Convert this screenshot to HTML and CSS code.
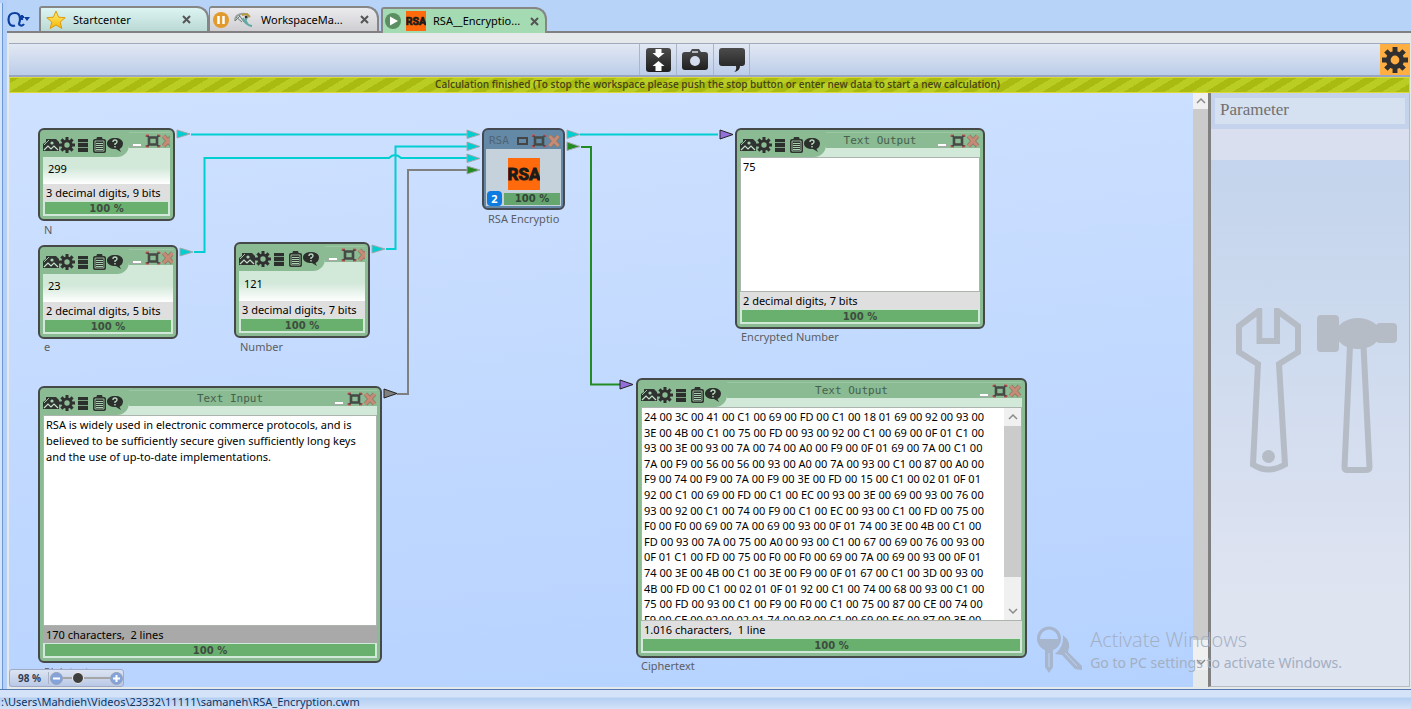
FILE: index.html
```html
<!DOCTYPE html>
<html lang="en">
<head>
<meta charset="utf-8">
<title>RSA_Encryption.cwm</title>
<link rel="stylesheet" href="styles.css">
</head>
<body>
<svg class="defs" aria-hidden="true">
  <defs>
    <linearGradient id="dark" x1="0" y1="0" x2="0" y2="1"><stop offset="0" stop-color="#4c4c4c"/><stop offset="1" stop-color="#1f1f1f"/></linearGradient>
    <linearGradient id="gold" x1="0" y1="0" x2="0" y2="1"><stop offset="0" stop-color="#fff27a"/><stop offset="1" stop-color="#f5b400"/></linearGradient>
    <symbol id="i-picture" viewBox="0 0 16 16"><path d="M0 14V7l3-2V2h10l3 3v9z" fill="#2f3331"/><path d="M1 8l5-5" stroke="#9cc5a4"/><circle cx="9" cy="6" r="1.6" fill="#a9cfb0"/><path d="M1 13l4-4 3 3 3-3 4 4" fill="none" stroke="#c4e0ca" stroke-width="1.2"/></symbol>
    <symbol id="i-gear" viewBox="0 0 16 16"><path d="M8 0v16M0 8h16M2.4 2.4l11.2 11.2M13.6 2.4L2.4 13.6" stroke="#303030" stroke-width="3"/><circle cx="8" cy="8" r="5.6" fill="#303030"/><circle cx="8" cy="8" r="2.7" class="hole"/></symbol>
    <symbol id="i-list" viewBox="0 0 16 16"><path d="M3 2h10v13H3z" fill="#2c302d"/><path d="M3 5.500h10M3 10.500h10" stroke="#8abb93" stroke-width=".8"/></symbol>
    <symbol id="i-clip" viewBox="0 0 16 16"><rect x="2" y="2" width="13" height="14" rx="2" fill="#303430"/><path d="M5 3h7L11 0H6z" fill="#303430"/><path d="M4 4h9v10H4z" fill="none" stroke="#a9cfb0" stroke-width=".8"/><path d="M5 6.500h7M5 8.500h7M5 10.500h7M5 12.500h7" stroke="#a9cfb0"/></symbol>
    <symbol id="i-help" viewBox="0 0 16 16"><path d="M8 1c4.500 0 8 2 8 5.500 0 3-2 5-3.500 5.500L14 15l-5-3C3 12 0 10 0 6.500S3.500 1 8 1z" fill="#2c302d"/><path d="M6 5q0-2 2-2t2 2q0 1-2 2v1M8 9v1.500" fill="none" stroke="#b9d8bf" stroke-width="1.400"/></symbol>
    <symbol id="i-max" viewBox="0 0 16 14"><path d="M4 3.500h8v7H4z" fill="none" stroke="#454a46" stroke-width="2.600"/><path d="M1 2h3M12 2h3M1 12h3M12 12h3" stroke="#454a46" stroke-width="2"/><path d="M1 3V1h3M12 1h3v2M1 11v2h3M15 11v2h-3" fill="none" stroke="#d0565a" stroke-width="1"/></symbol>
    <symbol id="i-close" viewBox="0 0 14 14"><path d="M2.500 2l9 10M11.500 2l-9 10" stroke="#8f7767" stroke-width="4.600"/><path d="M2.500 2l9 10M11.500 2l-9 10" stroke="#c68b75" stroke-width="3"/></symbol>
    <symbol id="i-rsa" viewBox="0 0 32 32"><path d="M0 0h32v32H0z" fill="#ff6a0d"/><text x="16" y="22" text-anchor="middle" class="rsa-letters">RSA</text></symbol>
    <symbol id="i-x" viewBox="0 0 9 9"><path d="M1 1l7 7M8 1L1 8" stroke="#555" stroke-width="2"/></symbol>
    <symbol id="i-up" viewBox="0 0 12 8"><path d="M2 6l4-4 4 4" fill="none" stroke="#8a8a8a" stroke-width="1.500"/></symbol>
    <symbol id="i-down" viewBox="0 0 12 8"><path d="M2 2l4 4 4-4" fill="none" stroke="#8a8a8a" stroke-width="1.500"/></symbol>
  </defs>
</svg>

<div class="window">
  <div class="side-edge"></div>
  <main class="workspace">
    <nav class="tabs">
      <button class="menu" aria-label="Menu">
        <svg width="24" height="18" viewBox="0 0 24 18"><path d="M8 14.500C4 16 1.500 13 1.500 8.500S4 2 8 2s5 3 5 6-1 4-1 5 3 3 5 0M15 4v5M12 6h5" fill="none" stroke="#0d3fa3" stroke-width="2.200"/><path d="M17 6h6l-3 4z" fill="#0d3fa3"/></svg>
      </button>
      <div class="tab tab-start">
        <svg width="20" height="20" viewBox="0 0 20 20"><path d="M10 1l2.600 6.200 6.600.5-5 4.300 1.600 6.500L10 15l-5.800 3.500L5.800 12l-5-4.300 6.600-.5z" fill="url(#gold)" stroke="#dd9a10"/></svg>
        <a href="#start">Startcenter</a>
        <button class="tab-close" aria-label="Close Startcenter"><svg width="9" height="9"><use href="#i-x"/></svg></button>
      </div>
      <div class="tab tab-manager">
        <svg width="16" height="16" viewBox="0 0 16 16"><circle cx="8" cy="8" r="8" fill="#e39a2d"/><path d="M5.500 4v8M10.500 4v8" stroke="#fff" stroke-width="2.500"/></svg>
        <svg class="manager-icon" width="20" height="16" viewBox="0 0 20 16"><path d="M1 9q0-6 6-7 6-1 8 3" fill="none" stroke="#9aa4a2" stroke-width="2"/><path d="M2 5l6 5M5 3l5 7M1 9l5-5" stroke="#6d7b78"/><path d="M8 3l5-1 3 3" fill="none" stroke="#b9983f" stroke-width="2"/><path d="M9 6q2 7 9 8M14 5q-3 1-2 4 2 5 5 5" fill="none" stroke="#64aaa4" stroke-width="2"/><circle cx="12" cy="5" r="1.300" fill="#333"/></svg>
        <a href="#manager">WorkspaceMa...</a>
        <button class="tab-close" aria-label="Close WorkspaceManager"><svg width="9" height="9"><use href="#i-x"/></svg></button>
      </div>
      <div class="tab tab-rsa">
        <svg width="16" height="16" viewBox="0 0 16 16"><circle cx="8" cy="8" r="8" fill="#5b8f61"/><path d="M5 3.500l8 4.500-8 4.500z" fill="#fff"/></svg>
        <svg class="rsa-small" width="20" height="20"><use href="#i-rsa"/></svg>
        <a href="#rsa">RSA__Encryptio...</a>
        <button class="tab-close" aria-label="Close RSA_Encryption"><svg width="9" height="9"><use href="#i-x"/></svg></button>
      </div>
    </nav>

    <section class="sheet">
      <div class="toolbar">
        <div class="tools">
          <button class="tool" aria-label="Fit to screen"><svg width="26" height="26" viewBox="0 0 26 26"><rect x="1" y="1" width="25" height="24" rx="3" fill="url(#dark)"/><path d="M10.500 2h6v4h3l-6 5-6-5h3zM13.500 14l6 5h-3v5h-6v-5h-3z" fill="#fff"/></svg></button>
          <button class="tool" aria-label="Screenshot"><svg width="28" height="26" viewBox="0 0 28 26"><path d="M4 5h5l2-3h7l2 3h4q3 0 3 3v12q0 3-3 3H4q-3 0-3-3V8q0-3 3-3z" fill="url(#dark)"/><path d="M11 5h6" stroke="#d5deee" stroke-width="1.500"/><circle cx="14" cy="14" r="5" fill="#d3ddee"/></svg></button>
          <button class="tool" aria-label="Comment"><svg width="28" height="26" viewBox="0 0 28 26"><path d="M4 1h20q3 0 3 3v12q0 3-3 3h-2q0 5-6 6 3-2 2-6H4q-3 0-3-3V4q0-3 3-3z" fill="url(#dark)"/></svg></button>
        </div>
        <button class="settings" aria-label="Settings"><svg width="26" height="26"><use href="#i-gear"/></svg></button>
      </div>
      <div class="banner">Calculation finished (To stop the workspace please push the stop button or enter new data to start a new calculation)</div>

      <div class="content">
        <div class="canvas">
          <svg class="wires" width="1184" height="594" viewBox="9 93 1184 594">
            <g fill="none" stroke="#00ced1" stroke-width="2">
              <path d="M191 134.500H468M194 252h10.500V158H389q6-6 12 0h67M386 249h9.500V146.500H468M580 134.500H718"/>
            </g>
            <path d="M397 394h11V170h60" fill="none" stroke="#808080" stroke-width="2"/>
            <path d="M581 147h10V384.500h29" fill="none" stroke="#228b22" stroke-width="2"/>
            <g fill="#00ced1" stroke="#a0a8ac">
              <path d="M177 130l13 4-13 4zM180 248l13 4-13 4zM372 245l13 4-13 4zM467 130l13 4.500-13 4zM467 142l13 4.500-13 4zM467 154l13 4.500-13 4zM567 130l13 4.500-13 4z"/>
            </g>
            <path d="M467 166l13 4-13 4zM567 142l13 4.500-13 4z" fill="#228b22" stroke="#a0a8ac"/>
            <path d="M720 130l13 4.500-13 4.500zM620 380l13 4.500-13 4.500z" fill="#9370db" stroke="#222"/>
            <path d="M384 389l13 4.500-13 4.500z" fill="#808080" stroke="#222"/>
          </svg>

          <article class="node node-n">
            <header class="head">
              <div class="icons"><button aria-label="View"><svg><use href="#i-picture"/></svg></button><button aria-label="Settings"><svg><use href="#i-gear"/></svg></button><button aria-label="Data"><svg><use href="#i-list"/></svg></button><button aria-label="Log"><svg><use href="#i-clip"/></svg></button><button aria-label="Help"><svg><use href="#i-help"/></svg></button></div>
              <div class="titlebar"><h2></h2><button class="min" aria-label="Minimize"></button><button class="max" aria-label="Maximize"><svg><use href="#i-max"/></svg></button><button class="close" aria-label="Close"><svg><use href="#i-close"/></svg></button></div>
            </header>
            <input class="value" id="n" type="text" value="299">
            <p class="info">3 decimal digits, 9 bits</p>
            <div class="progress"><span>100 %</span></div>
          </article>
          <label class="caption cap-n" for="n">N</label>

          <article class="node node-e">
            <header class="head">
              <div class="icons"><button aria-label="View"><svg><use href="#i-picture"/></svg></button><button aria-label="Settings"><svg><use href="#i-gear"/></svg></button><button aria-label="Data"><svg><use href="#i-list"/></svg></button><button aria-label="Log"><svg><use href="#i-clip"/></svg></button><button aria-label="Help"><svg><use href="#i-help"/></svg></button></div>
              <div class="titlebar"><h2></h2><button class="min" aria-label="Minimize"></button><button class="max" aria-label="Maximize"><svg><use href="#i-max"/></svg></button><button class="close" aria-label="Close"><svg><use href="#i-close"/></svg></button></div>
            </header>
            <input class="value" id="e" type="text" value="23">
            <p class="info">2 decimal digits, 5 bits</p>
            <div class="progress"><span>100 %</span></div>
          </article>
          <label class="caption cap-e" for="e">e</label>

          <article class="node node-number">
            <header class="head">
              <div class="icons"><button aria-label="View"><svg><use href="#i-picture"/></svg></button><button aria-label="Settings"><svg><use href="#i-gear"/></svg></button><button aria-label="Data"><svg><use href="#i-list"/></svg></button><button aria-label="Log"><svg><use href="#i-clip"/></svg></button><button aria-label="Help"><svg><use href="#i-help"/></svg></button></div>
              <div class="titlebar"><h2></h2><button class="min" aria-label="Minimize"></button><button class="max" aria-label="Maximize"><svg><use href="#i-max"/></svg></button><button class="close" aria-label="Close"><svg><use href="#i-close"/></svg></button></div>
            </header>
            <input class="value" id="number" type="text" value="121">
            <p class="info">3 decimal digits, 7 bits</p>
            <div class="progress"><span>100 %</span></div>
          </article>
          <label class="caption cap-number" for="number">Number</label>

          <article class="node-rsa">
            <header class="rsa-head"><h2>RSA</h2><button aria-label="Restore" class="restore"></button><button class="max" aria-label="Maximize"><svg><use href="#i-max"/></svg></button><button class="close" aria-label="Close"><svg><use href="#i-close"/></svg></button></header>
            <div class="rsa-body">
              <svg width="32" height="32"><use href="#i-rsa"/></svg>
              <div class="rsa-foot"><span class="badge">2</span><span class="rsa-bar">100 %</span></div>
            </div>
          </article>
          <span class="caption cap-rsa">RSA Encryptio</span>

          <article class="node node-enc">
            <header class="head">
              <div class="icons"><button aria-label="View"><svg><use href="#i-picture"/></svg></button><button aria-label="Settings"><svg><use href="#i-gear"/></svg></button><button aria-label="Data"><svg><use href="#i-list"/></svg></button><button aria-label="Log"><svg><use href="#i-clip"/></svg></button><button aria-label="Help"><svg><use href="#i-help"/></svg></button></div>
              <div class="titlebar"><h2>Text Output</h2><button class="min" aria-label="Minimize"></button><button class="max" aria-label="Maximize"><svg><use href="#i-max"/></svg></button><button class="close" aria-label="Close"><svg><use href="#i-close"/></svg></button></div>
            </header>
            <div class="textbox"><textarea id="enc" readonly>75</textarea></div>
            <p class="info">2 decimal digits, 7 bits</p>
            <div class="progress"><span>100 %</span></div>
          </article>
          <label class="caption cap-enc" for="enc">Encrypted Number</label>

          <label class="caption cap-plain" for="plain">Plaintext</label>
          <article class="node node-plain">
            <header class="head">
              <div class="icons"><button aria-label="View"><svg><use href="#i-picture"/></svg></button><button aria-label="Settings"><svg><use href="#i-gear"/></svg></button><button aria-label="Data"><svg><use href="#i-list"/></svg></button><button aria-label="Log"><svg><use href="#i-clip"/></svg></button><button aria-label="Help"><svg><use href="#i-help"/></svg></button></div>
              <div class="titlebar"><h2>Text Input</h2><button class="min" aria-label="Minimize"></button><button class="max" aria-label="Maximize"><svg><use href="#i-max"/></svg></button><button class="close" aria-label="Close"><svg><use href="#i-close"/></svg></button></div>
            </header>
            <div class="textbox"><textarea id="plain">RSA is widely used in electronic commerce protocols, and is
believed to be sufficiently secure given sufficiently long keys
and the use of up-to-date implementations.</textarea></div>
            <p class="info info-dark">170 characters,&nbsp; 2 lines</p>
            <div class="progress"><span>100 %</span></div>
          </article>

          <article class="node node-cipher">
            <header class="head">
              <div class="icons"><button aria-label="View"><svg><use href="#i-picture"/></svg></button><button aria-label="Settings"><svg><use href="#i-gear"/></svg></button><button aria-label="Data"><svg><use href="#i-list"/></svg></button><button aria-label="Log"><svg><use href="#i-clip"/></svg></button><button aria-label="Help"><svg><use href="#i-help"/></svg></button></div>
              <div class="titlebar"><h2>Text Output</h2><button class="min" aria-label="Minimize"></button><button class="max" aria-label="Maximize"><svg><use href="#i-max"/></svg></button><button class="close" aria-label="Close"><svg><use href="#i-close"/></svg></button></div>
            </header>
            <div class="textbox"><textarea id="cipher" class="hex" readonly>24 00 3C 00 41 00 C1 00 69 00 FD 00 C1 00 18 01 69 00 92 00 93 00
3E 00 4B 00 C1 00 75 00 FD 00 93 00 92 00 C1 00 69 00 0F 01 C1 00
93 00 3E 00 93 00 7A 00 74 00 A0 00 F9 00 0F 01 69 00 7A 00 C1 00
7A 00 F9 00 56 00 56 00 93 00 A0 00 7A 00 93 00 C1 00 87 00 A0 00
F9 00 74 00 F9 00 7A 00 F9 00 3E 00 FD 00 15 00 C1 00 02 01 0F 01
92 00 C1 00 69 00 FD 00 C1 00 EC 00 93 00 3E 00 69 00 93 00 76 00
93 00 92 00 C1 00 74 00 F9 00 C1 00 EC 00 93 00 C1 00 FD 00 75 00
F0 00 F0 00 69 00 7A 00 69 00 93 00 0F 01 74 00 3E 00 4B 00 C1 00
FD 00 93 00 7A 00 75 00 A0 00 93 00 C1 00 67 00 69 00 76 00 93 00
0F 01 C1 00 FD 00 75 00 F0 00 F0 00 69 00 7A 00 69 00 93 00 0F 01
74 00 3E 00 4B 00 C1 00 3E 00 F9 00 0F 01 67 00 C1 00 3D 00 93 00
4B 00 FD 00 C1 00 02 01 0F 01 92 00 C1 00 74 00 68 00 93 00 C1 00
75 00 FD 00 93 00 C1 00 F9 00 F0 00 C1 00 75 00 87 00 CE 00 74 00
F9 00 CE 00 92 00 02 01 74 00 93 00 C1 00 69 00 56 00 87 00 3E 00</textarea>
              <div class="scroll"><svg><use href="#i-up"/></svg><i class="thumb"></i><svg><use href="#i-down"/></svg></div>
            </div>
            <p class="info">1.016 characters,&nbsp; 1 line</p>
            <div class="progress"><span>100 %</span></div>
          </article>
          <label class="caption cap-cipher" for="cipher">Ciphertext</label>

          <div class="zoom">
            <label for="zoom">98 %</label>
            <button aria-label="Zoom out"><svg width="13" height="13" viewBox="0 0 13 13"><circle cx="6.500" cy="6.500" r="6" fill="#84a3da" stroke="#97a1b5"/><path d="M3 6.500h7" stroke="#fff" stroke-width="2"/></svg></button>
            <input id="zoom" type="range" min="0" max="400" value="98">
            <button aria-label="Zoom in"><svg width="13" height="13" viewBox="0 0 13 13"><circle cx="6.500" cy="6.500" r="6" fill="#84a3da" stroke="#97a1b5"/><path d="M3 6.500h7M6.500 3v7" stroke="#fff" stroke-width="2"/></svg></button>
          </div>
        </div>
        <div class="scroll scroll-main"><svg><use href="#i-up"/></svg><i class="thumb"></i><svg><use href="#i-down"/></svg></div>
        <aside class="panel">
          <div class="panel-head"><h1>Parameter</h1></div>
          <div class="panel-strip"></div>
          <div class="panel-art">
            <svg width="166" height="168" viewBox="1234 307 166 168" fill="none" stroke="#b5bcc6" stroke-width="6">
              <path d="M1259.500 309.500L1239 325v26l19 12-5 100.500q15 10 32 0L1279 363l19-12v-26l-21-15.500V340h-17.500z"/>
              <path d="M1262.500 304h11.500v33h-11.500z" fill="#cbd9ee" stroke="none"/>
              <circle cx="1268.500" cy="455.500" r="6.500" fill="#b5bcc6" stroke="none"/>
              <path d="M1350 345l-5.500 121q0 3 3 3h18q4 0 4-3l-6-121"/>
              <g fill="#b5bcc6" stroke="none"><rect x="1317" y="314" width="22" height="37" rx="4"/><ellipse cx="1358" cy="332.500" rx="22" ry="15.500"/><rect x="1376" y="322" width="21" height="20" rx="4"/></g>
            </svg>
          </div>
        </aside>
      </div>
    </section>
  </main>
</div>
<footer class="status"><span>:\Users\Mahdieh\Videos\23332\11111\samaneh\RSA_Encryption.cwm</span></footer>

<div class="watermark">
  <svg width="46" height="50" viewBox="0 0 46 50"><circle cx="12" cy="12.500" r="10.500" fill="none" stroke="#a7b5cd" stroke-width="3"/><path d="M1 13h22q0 8-7 11v17l-4 6-4-6V24Q1 21 1 13zM26 9q9 7 5 17l14 14v4l-7-1-13-14-7-1q9-7 8-19z" fill="#a7b5cd"/><path d="M12 27v14M28 27l12 13" stroke="#bad3fb"/></svg>
  <div><p class="wm-title">Activate Windows</p><p class="wm-text">Go to PC settings to activate Windows.</p></div>
</div>
</body>
</html>
```

FILE: styles.css
```css
* { box-sizing: border-box; }

body {
  margin: 0;
  min-height: 100vh;
  display: flex;
  flex-direction: column;
  overflow: hidden;
  background: #b8d3f8;
  font: 11px/16px "Noto Sans", "Open Sans", sans-serif;
  color: #000;
}

button { border: 0; padding: 0; background: none; display: block; font: inherit; }
svg { display: block; flex: none; }
p, h1, h2 { margin: 0; font-weight: 400; }
a { color: inherit; text-decoration: none; }
.defs { position: absolute; width: 0; height: 0; }

.window { flex: 1; display: flex; min-height: 0; }
.side-edge { width: 7px; flex: none; background: #b0cffa; border-right: 4px solid #b4d0f8; }
.side-edge::before { content: ""; display: block; height: 100%; background: #d3e4fb; border-right: 1px solid #6d97d2; margin-top: 3px; }
.workspace { flex: 1; min-width: 0; display: flex; flex-direction: column; }

/* Document tabs */
.tabs { height: 33px; flex: none; display: flex; align-items: flex-end; border-bottom: 2px solid #808080; }
.menu { width: 32px; height: 23px; }
.tab {
  display: flex;
  align-items: center;
  height: 25px;
  padding: 0 16px 0 5px;
  border: 2px solid #868686;
  border-bottom: 0;
  border-radius: 3px 12px 0 0;
}
.tab a { margin-left: 7px; white-space: nowrap; }
.tab-close { margin-left: auto; }
.tab-start { width: 170px; background: linear-gradient(#dcf4f2, #bbd9d4); }
.tab-manager { width: 170px; padding: 0 8px 0 3px; background: linear-gradient(#ebebee, #cfcfd3); border-left-width: 1px; }
.manager-icon { margin-left: 5px; }
.tab-rsa { width: 166px; height: 26px; margin: 0 0 -2px 2px; padding: 0 6px 0 2px; background: #a4dbb2; }
.rsa-small { margin-left: 5px; }
.rsa-letters { font: 700 17px "Roboto", sans-serif; fill: #1b1b1b; stroke: #1b1b1b; }

/* Sheet */
.sheet { flex: 1; min-height: 0; display: flex; flex-direction: column; padding: 10px 1px 2px 2px; background: #e5e9ea; }
.toolbar { height: 34px; flex: none; display: flex; border-top: 1px solid #9fabbc; border-bottom: 2px solid #98a6c4; background: linear-gradient(#e2e8f3, #bccde9); }
.tools { display: flex; margin-left: auto; }
.tool { width: 37px; border-left: 1px solid #aab5c8; display: grid; place-items: center; }
.tool:last-child { border-right: 1px solid #aab5c8; }
.settings { --hole: #ffae42; margin-left: auto; width: 30px; background: #ffae42; display: grid; place-items: center; }
.hole { fill: var(--hole, #8abb93); }
.banner {
  height: 16px;
  flex: none;
  padding-left: 16px;
  border: 1px solid #dcd83a;
  background: repeating-linear-gradient(-31deg, #a9ba10 0 7px, #bacd22 7px 14px);
  text-align: center;
  font: 600 10px/13px "Open Sans", sans-serif;
  color: #454516;
  white-space: nowrap;
}

.content { flex: 1; min-height: 0; display: flex; }
.canvas { flex: 1; min-width: 0; position: relative; overflow: hidden; background: linear-gradient(175deg, #cfe1ff, #b5d2ff); }
.wires { position: absolute; left: 0; top: 0; }

.scroll { width: 17px; flex: none; display: flex; flex-direction: column; align-items: center; background: #f0f0f0; }
.scroll svg { width: 12px; height: 8px; margin: 5px 0; }
.thumb { width: 100%; height: 151px; background: #cbcbcb; }
.scroll svg:last-child { margin-top: auto; }
.scroll-main { width: 15px; border-bottom: 17px solid #e5e9ea; }
.scroll-main svg { margin: 4px 0; }
.scroll-main svg:last-child { margin: 18px 0 4px; }
.scroll-main .thumb { height: auto; flex: 1; }

/* Parameter panel */
.panel { width: 202px; flex: none; display: flex; flex-direction: column; border-left: 3px solid #808080; border-right: 1px solid #b6bcc0; border-bottom: 1px solid #b6bcc0; background: linear-gradient(#c3d4ec 10%, #cddaee 40%, #dfe4f1 85%); }
.panel-head { padding: 5px 4px; background: #c4d3eb; }
.panel h1 { height: 26px; padding-left: 5px; background: #d5e0f0; font: 17px/24px "Liberation Serif", serif; color: #707070; }
.panel-strip { height: 31px; background: #dadff0; }
.panel-art { flex: 1; display: flex; justify-content: center; padding: 148px 0 0 14px; }

/* Nodes on the canvas */
.node { position: absolute; display: flex; flex-direction: column; padding: 2px 3px 3px; border: 2px solid #454a48; border-radius: 6px; background: #8abb93; }
.node-n { left: 29px; top: 35px; width: 137px; height: 93px; }
.node-e { left: 29px; top: 152px; width: 140px; height: 94px; }
.node-number { left: 225px; top: 149px; width: 136px; height: 96px; }
.node-enc { left: 726px; top: 35px; width: 250px; height: 201px; }
.node-plain { left: 29px; top: 293px; width: 344px; height: 277px; }
.node-cipher { left: 627px; top: 285px; width: 391px; height: 280px; }

.head { display: flex; height: 25px; flex: none; background: #d2e8d9; overflow: hidden; }
.icons { display: flex; flex: none; align-items: flex-start; padding: 5px 6px 0 0; background: #8abb93; border-bottom-right-radius: 12px; }
.icons svg { width: 16px; height: 16px; }
.titlebar { flex: 1; min-width: 0; height: 16px; display: flex; align-items: center; background: #8abb93; overflow: hidden; border-top: 1px solid #9cc7a4; }
.titlebar h2, .rsa-head h2 { flex: 1; text-align: center; white-space: nowrap; font: 11px/14px "DejaVu Sans Mono", monospace; color: #46604e; }
.min { flex: none; width: 10px; height: 3px; margin: 9px 3px 0; background: #fff; border: 1px solid #a9a9a9; border-top: 0; }
.max { flex: none; }
.max svg { width: 16px; height: 14px; }
.close { flex: none; }
.close svg { width: 14px; height: 14px; }

.value { flex: 1; min-height: 0; width: 100%; border: 0; padding: 0 5px 4px; background: linear-gradient(#d2e8d9 40%, #fff); font: inherit; color: inherit; }
.info { flex: none; height: 17px; padding-left: 3px; line-height: 17px; background: #dfdfdf; white-space: nowrap; }
.info-dark { background: #a9a9a9; }
.progress { flex: none; height: 15px; border: 2px solid #d2e8d9; border-top-width: 1px; background: #69b06e; text-align: center; font: 700 10px/13px "DejaVu Sans", sans-serif; color: #3e4c40; }
.textbox { flex: 1; min-height: 0; display: flex; border: 1px solid #abb5ad; background: #fff; overflow: hidden; }
.textbox textarea { flex: 1; min-width: 0; border: 0; padding: 1px 2px; margin: 0; resize: none; overflow: hidden; white-space: pre; background: #fff; font: inherit; color: inherit; outline: 0; }
.textbox .hex { line-height: 1.42; }

.caption { position: absolute; color: #5c5e62; white-space: nowrap; }
.cap-n { left: 35px; top: 129px; }
.cap-e { left: 35px; top: 246px; }
.cap-number { left: 231px; top: 246px; }
.cap-rsa { left: 479px; top: 118px; }
.cap-enc { left: 732px; top: 236px; }
.cap-plain { left: 35px; top: 571px; }
.cap-cipher { left: 632px; top: 565px; }

.node-rsa { position: absolute; left: 473px; top: 35px; width: 83px; height: 82px; display: flex; flex-direction: column; padding: 2px; border: 2px solid #454a52; border-radius: 6px; background: #6389a6; }
.rsa-head { height: 17px; flex: none; display: flex; align-items: center; }
.rsa-head h2 { flex: 1; text-align: left; padding-left: 3px; color: #506475; }
.restore { width: 11px; height: 8px; margin-right: 3px; border: 2px solid #454545; }
.rsa-body { flex: 1; display: flex; flex-direction: column; align-items: center; justify-content: space-between; padding: 9px 1px 0; background: #c5d2db; }
.rsa-foot { width: 100%; display: flex; align-items: center; gap: 2px; }
.badge { width: 15px; height: 15px; border-radius: 4px; background: #0d7be0; color: #fff; text-align: center; font: 700 11px/15px "Noto Sans", sans-serif; }
.rsa-bar { flex: 1; background: #65a66f; text-align: center; font: 700 10px/12px "DejaVu Sans", sans-serif; color: #334436; }

/* Zoom strip */
.zoom { position: absolute; left: 0; bottom: 0; height: 18px; width: 115px; display: flex; align-items: center; border: 1px solid #9fabc6; border-radius: 3px; background: linear-gradient(#dce4f2, #b9c9e6); }
.zoom label { width: 39px; padding-left: 8px; margin-right: 1px; border-right: 1px solid #a8b2c4; font: 700 10px/12px "Noto Sans", sans-serif; color: #333e55; white-space: nowrap; }
.zoom input { flex: 1; min-width: 0; height: 14px; margin: 0; appearance: none; background: linear-gradient(#a6a6a6, #a6a6a6) center / 100% 2px no-repeat; }
.zoom input::-webkit-slider-thumb { appearance: none; width: 12px; height: 12px; border-radius: 50%; border: 1px solid #f0f0f0; background: #3f3f3f; }

.status { height: 20px; flex: none; padding: 5px 0 0 1px; border-top: 1px solid #5579b0; background: linear-gradient(#d5e3f8 0 7px, #b4cff2 8px, #d3e2f8); line-height: 14px; color: #0c3465; white-space: nowrap; }

.watermark { position: absolute; right: 69px; bottom: 33px; display: flex; gap: 7px; pointer-events: none; color: #a3afc2; }
.wm-title { font: 300 20px/27px "Open Sans", sans-serif; }
.wm-text { font: 14px/20px "Noto Sans", sans-serif; }
```
